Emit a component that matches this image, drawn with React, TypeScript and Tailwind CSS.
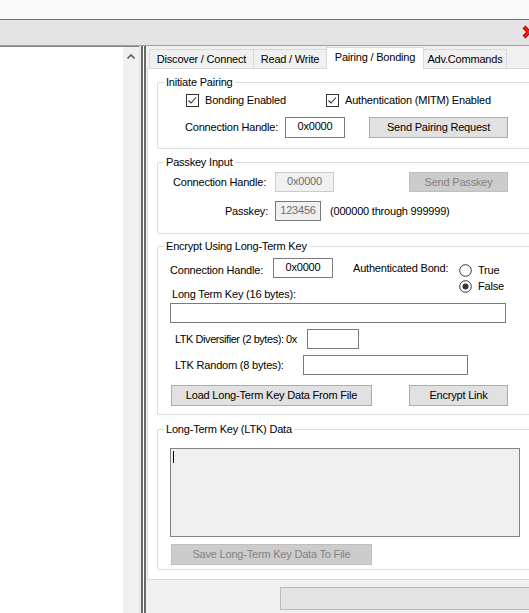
import React from 'react';

function CheckBox() {
  return (
    <svg width="13" height="13" viewBox="0 0 13 13" className="shrink-0">
      <rect x="0.5" y="0.5" width="12" height="12" fill="#fff" stroke="#333" />
      <path d="M2.5 6.5 L5 9 L10 3.5" fill="none" stroke="#333" strokeWidth="1.1" />
    </svg>
  );
}

function Radio({ checked }: { checked?: boolean }) {
  return (
    <svg width="13" height="13" viewBox="0 0 13 13" className="shrink-0">
      <circle cx="6.5" cy="6.5" r="5.8" fill="#fff" stroke="#333" />
      {checked && <circle cx="6.5" cy="6.5" r="3" fill="#333" />}
    </svg>
  );
}

function TextBox({ value, className, disabled, readOnly }: { value?: string; className: string; disabled?: boolean; readOnly?: boolean }) {
  const look = disabled
    ? 'bg-[#f0f0f0] border-[#cccccc] text-[#6d6d6d]'
    : readOnly
      ? 'bg-[#f0f0f0] border-[#7a7a7a] text-[#6d6d6d]'
      : 'bg-white border-[#7a7a7a] text-black';
  return (
    <div className={`shrink-0 border flex items-center justify-center pb-[2px] ${look} ${className}`}>
      {value}
    </div>
  );
}

function Button({ children, className, disabled }: { children: React.ReactNode; className: string; disabled?: boolean }) {
  const look = disabled
    ? 'bg-[#cccccc] border-[#bfbfbf] text-[#838383]'
    : 'bg-[#e1e1e1] border-[#adadad] text-black';
  return (
    <button className={`shrink-0 border flex items-center justify-center ${look} ${className}`}>
      {children}
    </button>
  );
}

function GroupBox({ title, className, children }: { title: string; className: string; children: React.ReactNode }) {
  return (
    <fieldset className={`shrink-0 ml-[9px] w-[392px] border border-[#dcdcdc] rounded-[2px] flex flex-col ${className}`}>
      <legend className="ml-[6px] px-[2px] leading-[13px]">{title}</legend>
      {children}
    </fieldset>
  );
}

export default function App() {
  return (
    <div className="w-[529px] h-[613px] overflow-hidden whitespace-nowrap flex flex-col bg-[#f0f0f0] text-[11px] leading-[13px] tracking-[-0.2px] text-black font-['Liberation_Sans',Arial,sans-serif]">
      <div className="h-[19px] shrink-0 bg-[#f9f9f9]" />
      <div className="h-[26px] shrink-0 bg-[#e3e3e3] border-t border-[#6d6d6d] flex items-center justify-end">
        <svg width="14" height="14" viewBox="0 0 14 14" className="mr-[-7px] mb-[1px]">
          <path d="M2 2 L12 12 M12 2 L2 12" stroke="#9b0000" strokeWidth="4" />
          <path d="M2 2 L12 12 M12 2 L2 12" stroke="#ff1a1a" strokeWidth="2" />
        </svg>
      </div>
      <div className="flex-1 min-h-0 flex border-t border-[#a0a0a0]">
        <div className="w-[123px] shrink-0 bg-white border-t border-[#828282]" />
        <div className="w-[16px] shrink-0 bg-[#f0f0f0] border-t border-[#828282] flex justify-center pt-[7px]">
          <svg width="8" height="5" viewBox="0 0 8 5">
            <path d="M0.5 4.5 L4 1 L7.5 4.5" fill="none" stroke="#606060" strokeWidth="1.6" />
          </svg>
        </div>
        <div className="w-[8px] shrink-0 flex">
          <div className="w-[2px] bg-[#e6e6e6]" />
          <div className="w-[2px] bg-[#6a6a6a]" />
          <div className="w-[1px] bg-white" />
          <div className="w-[2px] bg-[#6a6a6a]" />
          <div className="w-[1px] bg-[#f0f0f0]" />
        </div>

        <div className="w-[400px] shrink-0 flex flex-col">
          <div className="h-[22px] shrink-0 flex items-end pl-[2px]">
            <div className="w-[105px] h-[19px] border border-b-0 border-[#d9d9d9] bg-[#f0f0f0] flex items-center justify-center pt-[1px]">Discover / Connect</div>
            <div className="w-[74px] h-[19px] -ml-px border border-b-0 border-[#d9d9d9] bg-[#f0f0f0] flex items-center justify-center pt-[1px]">Read / Write</div>
            <div className="relative z-10 w-[98px] h-[22px] -mb-px -ml-px border border-b-0 border-[#d9d9d9] bg-white flex items-center justify-center pb-[3px]">Pairing / Bonding</div>
            <div className="w-[84px] h-[19px] -ml-px border border-b-0 border-[#d9d9d9] bg-[#f0f0f0] flex items-center justify-center pt-[1px]">Adv.Commands</div>
          </div>

          <div className="h-[512px] shrink-0 bg-white border border-[#d9d9d9] flex flex-col">
            <GroupBox title="Initiate Pairing" className="mt-[7px] h-[73px]">
              <div className="flex items-center mt-[5px] pl-[28px] h-[13px]">
                <CheckBox />
                <span className="ml-[6px] w-[121px]">Bonding Enabled</span>
                <CheckBox />
                <span className="ml-[6px]">Authentication (MITM) Enabled</span>
              </div>
              <div className="flex items-center mt-[10px] pl-[27px]">
                <span className="w-[100px]">Connection Handle:</span>
                <TextBox className="w-[60px] h-[21px]" value="0x0000" />
                <Button className="ml-[24px] w-[139px] h-[21px]">Send Pairing Request</Button>
              </div>
            </GroupBox>

            <GroupBox title="Passkey Input" className="mt-[7px] h-[78px]">
              <div className="flex items-center mt-[3px] pl-[15px]">
                <span className="w-[102px]">Connection Handle:</span>
                <TextBox className="w-[59px] h-[20px]" value="0x0000" disabled />
                <Button className="ml-[75px] w-[99px] h-[20px]" disabled>Send Passkey</Button>
              </div>
              <div className="flex items-center mt-[9px] pl-[15px]">
                <span className="w-[102px] text-right pr-[7px]">Passkey:</span>
                <TextBox className="w-[46px] h-[20px]" value="123456" readOnly />
                <span className="ml-[9px]">(000000 through 999999)</span>
              </div>
            </GroupBox>

            <GroupBox title="Encrypt Using Long-Term Key" className="mt-[6px] h-[175px]">
              <div className="flex items-start mt-[5px] pl-[12px] h-[29px]">
                <span className="w-[103px] mt-[6px]">Connection Handle:</span>
                <TextBox className="w-[60px] h-[20px]" value="0x0000" />
                <span className="ml-[20px] w-[106px] mt-[4px]">Authenticated Bond:</span>
                <div className="flex flex-col mt-[6px]">
                  <div className="flex items-center h-[13px]">
                    <Radio />
                    <span className="ml-[6px]">True</span>
                  </div>
                  <div className="flex items-center h-[13px] mt-[3px]">
                    <Radio checked />
                    <span className="ml-[6px]">False</span>
                  </div>
                </div>
              </div>
              <div className="mt-[1px] pl-[14px]">Long Term Key (16 bytes):</div>
              <TextBox className="mt-[2px] ml-[12px] w-[336px] h-[20px]" />
              <div className="flex items-center mt-[6px] pl-[17px]">
                <span className="w-[132px] tracking-[-0.45px]">LTK Diversifier (2 bytes): 0x</span>
                <TextBox className="w-[52px] h-[20px]" />
              </div>
              <div className="flex items-center mt-[6px] pl-[17px]">
                <span className="w-[128px]">LTK Random (8 bytes):</span>
                <TextBox className="w-[165px] h-[20px]" />
              </div>
              <div className="flex items-center mt-[10px] pl-[13px]">
                <Button className="w-[201px] h-[21px]">Load Long-Term Key Data From File</Button>
                <Button className="ml-[37px] w-[99px] h-[21px]">Encrypt Link</Button>
              </div>
            </GroupBox>

            <GroupBox title="Long-Term Key (LTK) Data" className="mt-[8px] h-[147px]">
              <div className="mt-[12px] ml-[12px] w-[350px] h-[89px] shrink-0 bg-[#f0f0f0] border border-[#828282] pl-[2px] pt-[2px]">
                <div className="w-[1px] h-[12px] bg-black" />
              </div>
              <Button className="mt-[7px] ml-[13px] w-[201px] h-[21px]" disabled>Save Long-Term Key Data To File</Button>
            </GroupBox>
          </div>

          <div className="mt-[7px] ml-[133px] w-[300px] h-[23px] shrink-0 bg-[#e3e3e3] border border-[#b9b9b9]" />
        </div>
      </div>
    </div>
  );
}
